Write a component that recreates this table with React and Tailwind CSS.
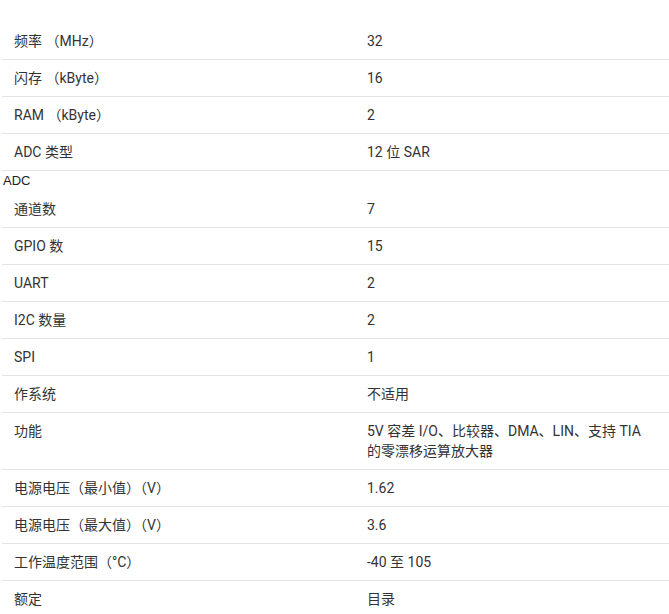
export default function App() {
  const top = [
    ["频率 （MHz）", "32"],
    ["闪存 （kByte）", "16"],
    ["RAM （kByte）", "2"],
    ["ADC 类型", "12 位 SAR"],
  ];
  const rest = [
    ["通道数", "7"],
    ["GPIO 数", "15"],
    ["UART", "2"],
    ["I2C 数量", "2"],
    ["SPI", "1"],
    ["作系统", "不适用"],
    ["功能", "5V 容差 I/O、比较器、DMA、LIN、支持 TIA 的零漂移运算放大器"],
    ["电源电压（最小值）（V）", "1.62"],
    ["电源电压（最大值）（V）", "3.6"],
    ["工作温度范围（°C）", "-40 至 105"],
    ["额定", "目录"],
  ];
  const Row = ({ k, v }) => (
    <div className="grid grid-cols-[353px_1fr] border-b border-[#e3e3e3]">
      <div className="px-3 py-2 leading-5">{k}</div>
      <div className="pl-3 pr-5 py-2 leading-5">{v}</div>
    </div>
  );
  return (
    <div
      className="w-[669px] h-[614px] overflow-hidden bg-white text-[14px] text-[#333333] pt-[23px] pl-[2px]"
      style={{ fontFamily: 'Roboto, "Noto Sans CJK SC", sans-serif' }}
    >
      {top.map(([k, v]) => (
        <Row key={k} k={k} v={v} />
      ))}
      <div
        className="text-[13px] leading-5 pl-px text-[#222]"
        style={{ fontFamily: '"Liberation Sans", Arial, sans-serif' }}
      >
        ADC
      </div>
      {rest.map(([k, v]) => (
        <Row key={k} k={k} v={v} />
      ))}
    </div>
  );
}
